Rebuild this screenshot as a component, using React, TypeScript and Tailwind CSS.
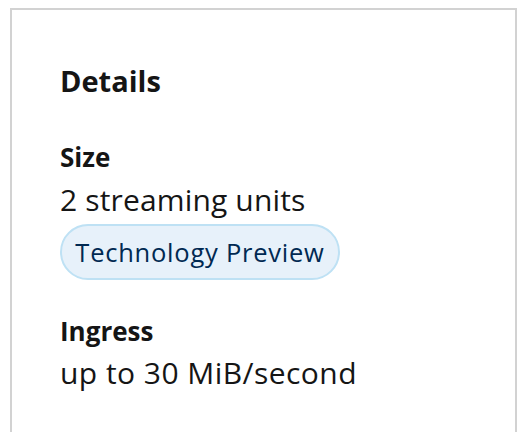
export default function App() {
  return (
    <div className="w-[530px] h-[432px] overflow-hidden bg-white pt-2 pl-[10px] pr-[13px] font-['Open_Sans',sans-serif] text-[#151515]">
      <div className="h-[440px] border-2 border-b-0 border-[#d2d2d2] pl-12 pt-[53px]">
        <h2 className="text-[29px] leading-[36px] font-bold">Details</h2>

        <dl className="mt-[42px] flex flex-col">
          <dt className="text-[26px] leading-[32px] font-bold">Size</dt>
          <dd className="mt-[8px] text-[30px] leading-[38px] tracking-[0.005em]">2 streaming units</dd>
          <div className="mt-[5px]">
            <span className="inline-flex h-[56px] w-[280px] items-center justify-center rounded-full border-2 border-[#bee1f4] bg-[#e7f1fa] text-[25.5px] text-[#002952] tracking-[0.03em]">
              Technology Preview
            </span>
          </div>

          <dt className="mt-[35px] text-[26px] leading-[32px] font-bold">Ingress</dt>
          <dd className="mt-[7px] text-[30px] leading-[38px] tracking-[0.015em]">up to 30 MiB/second</dd>
        </dl>
      </div>
    </div>
  );
}
